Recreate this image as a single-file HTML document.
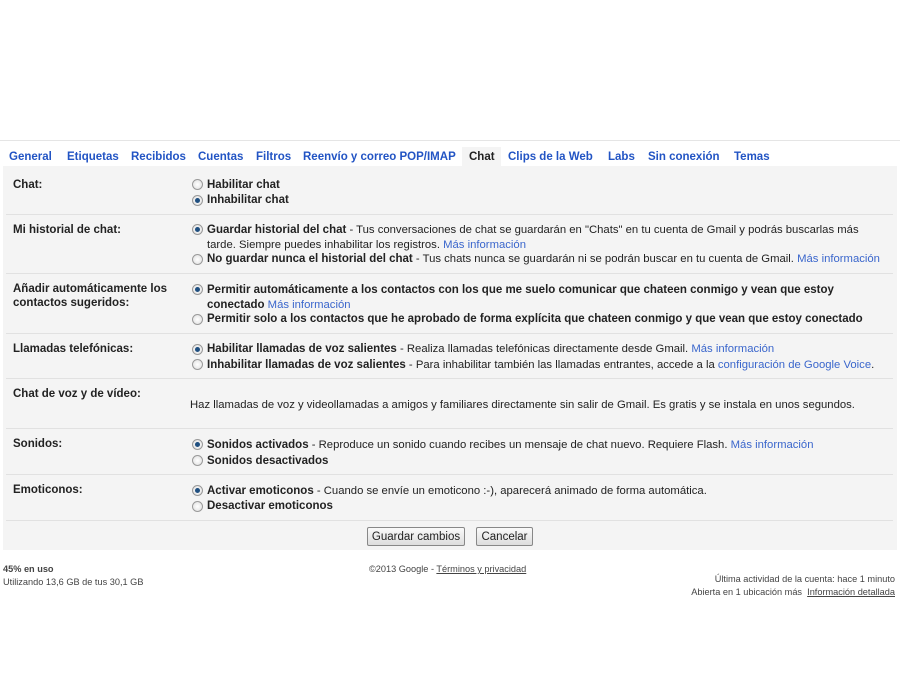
<!DOCTYPE html>
<html><head><meta charset="utf-8"><style>
body{margin:0;width:900px;height:700px;background:#fff;font-family:"Liberation Sans",Arial,sans-serif;font-size:11.3px;color:#222;position:relative;overflow:hidden}
.a{position:absolute;white-space:nowrap;margin-top:1px}
.tab{position:absolute;top:151px;font-weight:bold;color:#2254c4;font-size:11.5px}
.panel{position:absolute;left:3px;top:166px;width:894px;height:384px;background:#f4f4f4}
.sep{position:absolute;left:6px;width:887px;height:1px;background:#e1e1e1}
.lbl{position:absolute;left:13px;font-weight:bold;color:#222;line-height:14px;font-size:11.5px;margin-top:1px}
.r{position:absolute;left:192px;width:9px;height:9px;border:1px solid #999;border-radius:50%;background:radial-gradient(#fff,#ddd)}
.r.on::after{content:"";position:absolute;left:2px;top:2px;width:5px;height:5px;border-radius:50%;background:#1f4f80}
.t{position:absolute;left:207px;white-space:nowrap;line-height:15px;margin-top:1px}
b{color:#222;font-size:11.5px}
.l{color:#3a66cc}
.btn{position:absolute;top:527px;height:17px;border:1px solid #888;border-radius:2px;background:linear-gradient(#fafafa,#ddd);line-height:18px;text-align:center;color:#222;font-size:11.5px}
.f{font-size:9.2px;color:#444;position:absolute;white-space:nowrap}
</style></head><body>
<div style="position:absolute;left:0;top:140px;width:900px;height:1px;background:#e5e5e5"></div>
<div style="position:absolute;left:462px;top:147px;width:39px;height:19px;background:#f4f4f4"></div>
<span class="tab" style="left:9px">General</span>
<span class="tab" style="left:67px">Etiquetas</span>
<span class="tab" style="left:131px">Recibidos</span>
<span class="tab" style="left:198px">Cuentas</span>
<span class="tab" style="left:256px">Filtros</span>
<span class="tab" style="left:303px">Reenvío y correo POP/IMAP</span>
<span class="tab" style="left:469px;color:#222">Chat</span>
<span class="tab" style="left:508px">Clips de la Web</span>
<span class="tab" style="left:608px">Labs</span>
<span class="tab" style="left:648px">Sin conexión</span>
<span class="tab" style="left:734px">Temas</span>
<div class="panel"></div>
<div class="sep" style="top:214px"></div><div class="sep" style="top:273px"></div><div class="sep" style="top:333px"></div><div class="sep" style="top:378px"></div><div class="sep" style="top:428px"></div><div class="sep" style="top:474px"></div><div class="sep" style="top:520px"></div>

<div class="lbl" style="top:177px">Chat:</div>
<div class="r" style="top:179px"></div><div class="t" style="top:177px"><b>Habilitar chat</b></div>
<div class="r on" style="top:195px"></div><div class="t" style="top:192px"><b>Inhabilitar chat</b></div>

<div class="lbl" style="top:222px">Mi historial de chat:</div>
<div class="r on" style="top:224px"></div><div class="t" style="top:222px"><b>Guardar historial del chat</b> - Tus conversaciones de chat se guardarán en "Chats" en tu cuenta de Gmail y podrás buscarlas más<br>tarde. Siempre puedes inhabilitar los registros. <span class="l">Más información</span></div>
<div class="r" style="top:254px"></div><div class="t" style="top:251px"><b>No guardar nunca el historial del chat</b> - Tus chats nunca se guardarán ni se podrán buscar en tu cuenta de Gmail. <span class="l">Más información</span></div>

<div class="lbl" style="top:281px">Añadir automáticamente los<br>contactos sugeridos:</div>
<div class="r on" style="top:284px"></div><div class="t" style="top:282px"><b>Permitir automáticamente a los contactos con los que me suelo comunicar que chateen conmigo y vean que estoy<br>conectado</b> <span class="l">Más información</span></div>
<div class="r" style="top:314px"></div><div class="t" style="top:311px"><b>Permitir solo a los contactos que he aprobado de forma explícita que chateen conmigo y que vean que estoy conectado</b></div>

<div class="lbl" style="top:341px">Llamadas telefónicas:</div>
<div class="r on" style="top:344px"></div><div class="t" style="top:341px"><b>Habilitar llamadas de voz salientes</b> - Realiza llamadas telefónicas directamente desde Gmail. <span class="l">Más información</span></div>
<div class="r" style="top:359px"></div><div class="t" style="top:357px"><b>Inhabilitar llamadas de voz salientes</b> - Para inhabilitar también las llamadas entrantes, accede a la <span class="l">configuración de Google Voice</span>.</div>

<div class="lbl" style="top:386px">Chat de voz y de vídeo:</div>
<div class="a" style="left:190px;top:398px">Haz llamadas de voz y videollamadas a amigos y familiares directamente sin salir de Gmail. Es gratis y se instala en unos segundos.</div>

<div class="lbl" style="top:436px">Sonidos:</div>
<div class="r on" style="top:439px"></div><div class="t" style="top:437px"><b>Sonidos activados</b> - Reproduce un sonido cuando recibes un mensaje de chat nuevo. Requiere Flash. <span class="l">Más información</span></div>
<div class="r" style="top:455px"></div><div class="t" style="top:453px"><b>Sonidos desactivados</b></div>

<div class="lbl" style="top:482px">Emoticonos:</div>
<div class="r on" style="top:485px"></div><div class="t" style="top:483px"><b>Activar emoticonos</b> - Cuando se envíe un emoticono :-), aparecerá animado de forma automática.</div>
<div class="r" style="top:501px"></div><div class="t" style="top:498px"><b>Desactivar emoticonos</b></div>

<div class="btn" style="left:367px;width:96px">Guardar cambios</div>
<div class="btn" style="left:476px;width:55px">Cancelar</div>

<div class="f" style="left:3px;top:564px;font-weight:bold">45% en uso</div>
<div class="f" style="left:3px;top:577px">Utilizando 13,6 GB de tus 30,1 GB</div>
<div class="f" style="left:369px;top:564px">©2013 Google - <u>Términos y privacidad</u></div>
<div class="f" style="right:5px;top:574px">Última actividad de la cuenta: hace 1 minuto</div>
<div class="f" style="right:5px;top:587px">Abierta en 1 ubicación más &nbsp;<u>Información detallada</u></div>
</body></html>
